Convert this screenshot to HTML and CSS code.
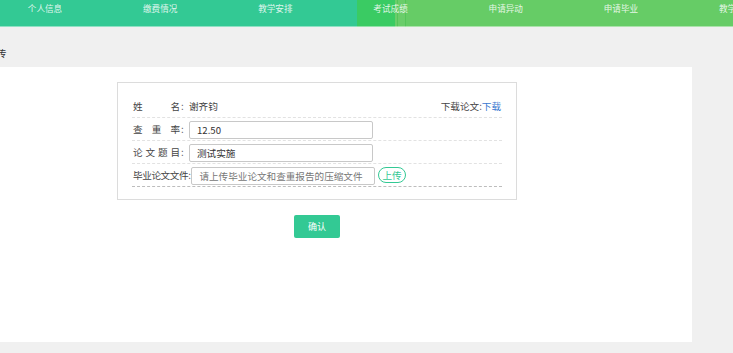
FILE: index.html
```html
<!DOCTYPE html>
<html lang="zh-CN">
<head>
<meta charset="utf-8">
<title>论文上传</title>
<link rel="stylesheet" href="styles.css">
</head>
<body>
<nav class="nav">
  <ul class="nav-list">
    <li>个人信息</li>
    <li>缴费情况</li>
    <li>教学安排</li>
    <li>考试成绩</li>
    <li>申请异动</li>
    <li>申请毕业</li>
    <li>教学计划</li>
  </ul>
</nav>
<div class="title">论文上传</div>
<main class="panel">
  <div class="wrap">
    <form class="box">
      <div class="row">
        <span class="label"><span class="lt">姓名</span>:</span>
        <span class="value">谢齐钧</span>
        <span class="dl">下载论文:<a class="link">下载</a></span>
      </div>
      <div class="row">
        <span class="label"><span class="lt">查重率</span>:</span>
        <input class="field" type="text" value="12.50">
      </div>
      <div class="row">
        <span class="label"><span class="lt">论文题目</span>:</span>
        <input class="field" type="text" value="测试实施">
      </div>
      <div class="row last">
        <span class="label-auto">毕业论文文件:</span>
        <input class="field f2" type="text" placeholder="请上传毕业论文和查重报告的压缩文件">
        <span class="upload">上传</span>
      </div>
    </form>
    <div class="actions"><button class="confirm" type="button">确认</button></div>
  </div>
</main>
</body>
</html>
```
FILE: styles.css
```css
* { box-sizing: border-box; }
html, body { margin: 0; padding: 0; }
body {
  background: #f0f0f0;
  font-family: "Noto Sans CJK SC", "Liberation Sans", sans-serif;
  font-size: 9.6px;
  color: #444;
  width: 733px;
  height: 353px;
  overflow: hidden;
}
.nav {
  height: 27px;
  overflow: hidden;
  border-bottom: 1px solid rgba(255,255,255,0.45);
  background: linear-gradient(to right,
    #33c994 0, #33c994 357px,
    #3acb63 357px, #3acb63 395px,
    #6acd6a 395px, #6acd6a 397px,
    #55c55a 397px, #55c55a 398px,
    #6acd6a 398px, #6acd6a 405px,
    #55c55a 405px, #55c55a 406px,
    #66cc66 406px, #66cc66 100%);
}
.nav-list {
  list-style: none;
  margin: 0 0 0 -12.6px;
  padding: 0;
  display: flex;
  white-space: nowrap;
}
.nav-list li {
  flex: 0 0 115.2px;
  text-align: center;
  color: rgba(255,255,255,0.85);
  font-size: 8.6px;
  line-height: 17px;
}
.title {
  padding: 19px 0 7px;
  line-height: 14px;
  margin-left: -32px;
  color: #333;
  font-size: 9.6px;
}
.panel {
  background: #fff;
  width: 692px;
  height: 275px;
  padding: 15px 0 0 117px;
}
.wrap { width: 400px; }
.box {
  margin: 0;
  border: 1px solid #dcdcdc;
  padding: 12px 14px 12px 14px;
}
.row {
  height: 23px;
  display: flex;
  align-items: center;
  border-bottom: 1px dashed #e2e2e2;
  padding-left: 1px;
  padding-right: 1px;
}
.row.last { border-bottom-color: #bdbdbd; }
.label {
  flex: none;
  display: flex;
  width: 56px;
  margin-right: 0;
}
.lt {
  width: 47px;
  text-align: justify;
  text-align-last: justify;
  margin-right: 1px;
}
.label-auto { margin-right: 1px; letter-spacing: -0.4px; }
.value { flex: 1; }
.dl { color: #444; }
.link { color: #3a78d0; }
.field {
  width: 184px;
  height: 18px;
  border: 1px solid #c8c8c8;
  border-radius: 2px;
  padding: 0 0 0 7px;
  font: inherit;
  font-size: 9.6px;
  color: #333;
  outline: none;
  margin-top: 1px;
}
.field::placeholder { color: #777; }
.upload {
  margin-left: 3px;
  height: 16px;
  line-height: 14px;
  padding: 0 3px;
  border: 1px solid #33c994;
  border-radius: 8px;
  color: #33c994;
}
.actions {
  display: flex;
  justify-content: center;
  margin-top: 15px;
}
.confirm {
  width: 46px;
  height: 23px;
  border: 0;
  border-radius: 2px;
  background: #33c994;
  color: #fff;
  font: inherit;
  font-size: 9px;
  padding: 0;
}
```
